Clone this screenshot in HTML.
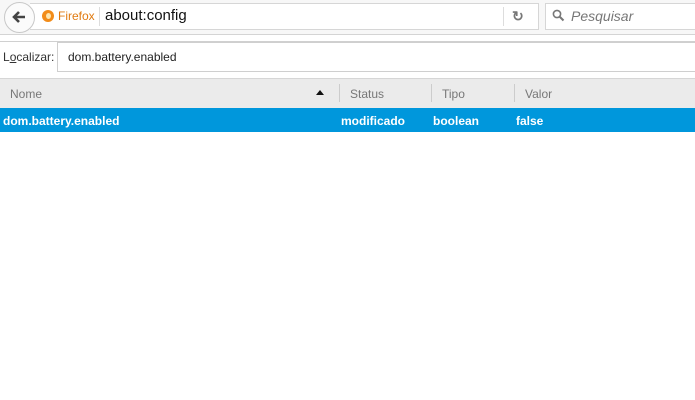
<!DOCTYPE html>
<html><head><meta charset="utf-8"><style>
*{margin:0;padding:0;box-sizing:border-box}
body{width:695px;height:400px;background:#fff;font-family:"Liberation Sans",sans-serif;position:relative;overflow:hidden}
.a{position:absolute}
</style></head><body>
<div class="a" style="left:0;top:0;width:695px;height:35px;background:#f7f7f7;border-bottom:1px solid #d4d4d4"></div>
<div class="a" style="left:30px;top:3px;width:509px;height:27px;background:#fff;border:1px solid #d6d6d6;border-left:none"></div>
<div class="a" style="left:4px;top:2px;width:31px;height:31px;border-radius:50%;background:#fbfbfb;border:1px solid #c8c8c8"></div>
<svg class="a" style="left:11px;top:9px" width="16" height="16" viewBox="0 0 16 16"><path d="M14 8H3M8 3L3 8l5 5" stroke="#444" stroke-width="2.6" fill="none"/></svg>
<div class="a" style="left:42px;top:10px;width:12px;height:12px;border-radius:50%;background:#f28c1a"></div>
<div class="a" style="left:46px;top:13px;width:5px;height:6px;border-radius:50%;background:#fde6b0"></div>
<div class="a" style="left:58px;top:9px;font-size:12px;color:#e07a10">Firefox</div>
<div class="a" style="left:99px;top:7px;width:1px;height:19px;background:#ddd"></div>
<div class="a" style="left:105px;top:7px;font-size:15px;color:#111">about:config</div>
<div class="a" style="left:503px;top:7px;width:1px;height:19px;background:#ddd"></div>
<div class="a" style="left:512px;top:8px;font-size:14px;color:#777;font-weight:bold">↻</div>
<div class="a" style="left:545px;top:3px;width:152px;height:27px;background:#fff;border:1px solid #d6d6d6"></div>
<svg class="a" style="left:552px;top:9px" width="13" height="13" viewBox="0 0 13 13"><circle cx="5" cy="5" r="3.6" stroke="#777" stroke-width="1.6" fill="none"/><path d="M7.5 7.5l4 4" stroke="#777" stroke-width="2"/></svg>
<div class="a" style="left:571px;top:8px;font-size:14px;color:#777;font-style:italic">Pesquisar</div>
<div class="a" style="left:0;top:41px;width:695px;height:1px;background:#d0d0d0"></div>
<div class="a" style="left:3px;top:50px;font-size:12px;color:#333">L<u>o</u>calizar:</div>
<div class="a" style="left:57px;top:42px;width:640px;height:30px;background:#fff;border:1px solid #cfcfcf"></div>
<div class="a" style="left:68px;top:50px;font-size:12px;color:#222">dom.battery.enabled</div>
<div class="a" style="left:0;top:78px;width:695px;height:30px;background:#ebebeb;border-top:1px solid #d6d6d6"></div>
<div class="a" style="left:10px;top:87px;font-size:12px;color:#777">Nome</div>
<div class="a" style="left:316px;top:90px;width:0;height:0;border-left:4px solid transparent;border-right:4px solid transparent;border-bottom:5px solid #111"></div>
<div class="a" style="left:339px;top:84px;width:1px;height:18px;background:#ccc"></div>
<div class="a" style="left:350px;top:87px;font-size:12px;color:#777">Status</div>
<div class="a" style="left:431px;top:84px;width:1px;height:18px;background:#ccc"></div>
<div class="a" style="left:442px;top:87px;font-size:12px;color:#777">Tipo</div>
<div class="a" style="left:514px;top:84px;width:1px;height:18px;background:#ccc"></div>
<div class="a" style="left:525px;top:87px;font-size:12px;color:#777">Valor</div>
<div class="a" style="left:0;top:108px;width:695px;height:24px;background:#0097dc"></div>
<div class="a" style="left:3px;top:114px;font-size:12px;color:#fff;font-weight:bold">dom.battery.enabled</div>
<div class="a" style="left:341px;top:114px;font-size:12px;color:#fff;font-weight:bold">modificado</div>
<div class="a" style="left:433px;top:114px;font-size:12px;color:#fff;font-weight:bold">boolean</div>
<div class="a" style="left:516px;top:114px;font-size:12px;color:#fff;font-weight:bold">false</div>
</body></html>
